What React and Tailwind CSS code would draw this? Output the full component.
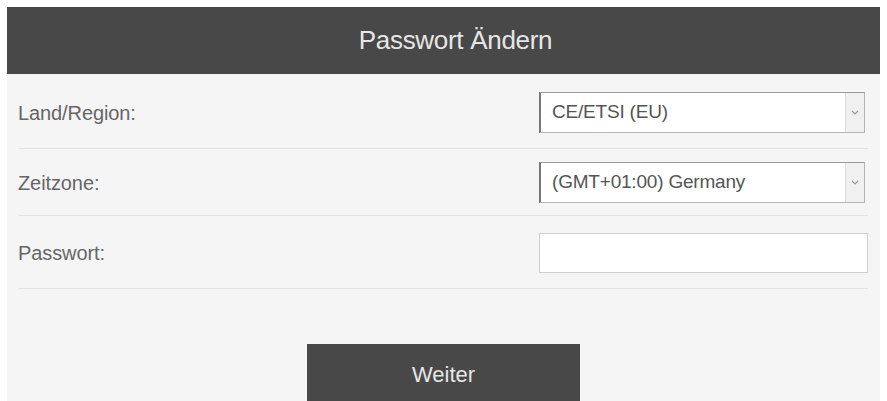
import React from 'react';

const font = { fontFamily: '"Liberation Sans", Arial, sans-serif' };

const Select = ({ value }) => (
  <div className="flex h-[41px] w-[326px] items-stretch border border-[#b5b5b5] border-l-2 border-l-[#777] border-t-[#999] bg-white">
    <div className="flex flex-1 items-center pl-[11px] text-[19px] tracking-[-0.2px] text-[#555]">{value}</div>
    <div className="flex w-[19px] items-center justify-center border-l border-[#ddd] bg-[#f0f0f0]">
      <svg width="8" height="5" viewBox="0 0 8 5">
        <path d="M1 1 L4 4 L7 1" fill="none" stroke="#999" strokeWidth="1.2" />
      </svg>
    </div>
  </div>
);

const Row = ({ label, children, pt, pb }) => (
  <div className={`flex items-center justify-between border-b border-[#e2e2e2] ${pt} ${pb}`}>
    <span className="-ml-[1px] text-[20px] tracking-[-0.1px] text-[#666]">{label}</span>
    {children}
  </div>
);

export default function App() {
  return (
    <div className="h-[401px] w-[887px] overflow-hidden bg-white pl-[7px] pr-[7px] pt-[7px]" style={font}>
      <div className="h-full bg-[#f5f5f5]">
        <div className="flex h-[67px] items-center justify-center bg-[#484848] pl-[24px] text-[26px] tracking-[-0.3px] text-[#e6e6e6]">
          Passwort Ändern
        </div>
        <div className="pl-[12px] pr-[12px]">
          <Row label="Land/Region:" pt="pt-[18px]" pb="pb-[15px]">
            <div className="mr-[3px]"><Select value="CE/ETSI (EU)" /></div>
          </Row>
          <Row label="Zeitzone:" pt="pt-[13px]" pb="pb-[12px]">
            <div className="mr-[3px]"><Select value="(GMT+01:00) Germany" /></div>
          </Row>
          <Row label="Passwort:" pt="pt-[17px]" pb="pb-[15px]">
            <input type="password" className="h-[40px] w-[329px] border border-[#cfcfcf] bg-white outline-none" />
          </Row>
        </div>
        <div className="flex justify-center pt-[55px]">
          <button className="h-[60px] w-[273px] bg-[#484848] text-[22px] text-[#e6e6e6]">Weiter</button>
        </div>
      </div>
    </div>
  );
}
